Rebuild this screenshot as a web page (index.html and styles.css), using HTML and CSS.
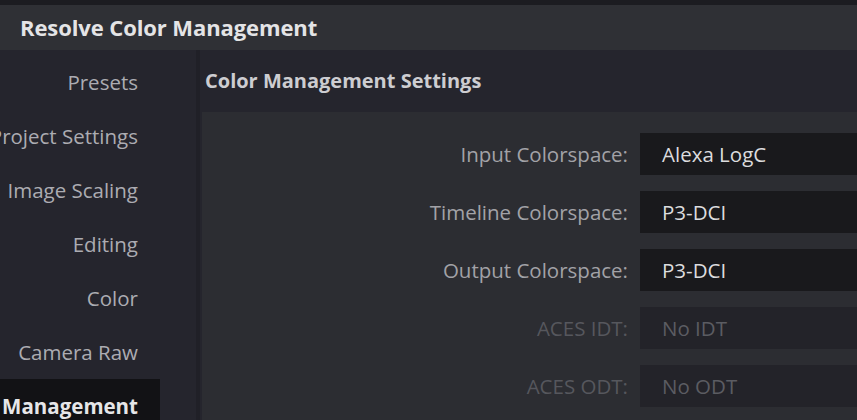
FILE: index.html
```html
<!DOCTYPE html>
<html>
<head>
<meta charset="utf-8">
<link rel="stylesheet" href="styles.css">
</head>
<body>
<div class="window">
  <header class="titlebar">Resolve Color Management</header>
  <div class="content">
    <nav class="sidebar">
      <div class="nav-item"><span>Presets</span></div>
      <div class="nav-item"><span>Project Settings</span></div>
      <div class="nav-item"><span>Image Scaling</span></div>
      <div class="nav-item"><span>Editing</span></div>
      <div class="nav-item"><span>Color</span></div>
      <div class="nav-item"><span>Camera Raw</span></div>
      <div class="nav-item selected"><span>Color Management</span></div>
    </nav>
    <main class="main">
      <h1 class="heading">Color Management Settings</h1>
      <section class="panel">
        <div class="row">
          <label class="label">Input Colorspace:</label>
          <div class="field">Alexa LogC</div>
        </div>
        <div class="row">
          <label class="label">Timeline Colorspace:</label>
          <div class="field">P3-DCI</div>
        </div>
        <div class="row">
          <label class="label">Output Colorspace:</label>
          <div class="field">P3-DCI</div>
        </div>
        <div class="row disabled">
          <label class="label">ACES IDT:</label>
          <div class="field">No IDT</div>
        </div>
        <div class="row disabled">
          <label class="label">ACES ODT:</label>
          <div class="field">No ODT</div>
        </div>
      </section>
    </main>
  </div>
</div>
</body>
</html>
```
FILE: styles.css
```css
html, body {
  margin: 0;
  padding: 0;
  background: #25252d;
  overflow: hidden;
}
.window {
  width: 857px;
  height: 420px;
  overflow: hidden;
  font-family: "Open Sans", "Noto Sans", sans-serif;
  display: flex;
  flex-direction: column;
}
.titlebar {
  height: 45px;
  border-top: 5px solid #1c1c21;
  background: #2f3035;
  color: #e4e4e6;
  font-size: 22px;
  font-weight: 700;
  line-height: 45px;
  padding-left: 20px;
  letter-spacing: -0.1px;
  flex: none;
}
.content {
  flex: 1;
  display: flex;
  min-height: 0;
}
.sidebar {
  flex: none;
  width: 200px;
  background: #25252d;
  border-right: 4px solid #202027;
  padding-top: 5px;
  box-sizing: border-box;
}
.nav-item {
  width: 160px;
  height: 54px;
  display: flex;
  justify-content: flex-end;
  align-items: center;
  padding-right: 22px;
  box-sizing: border-box;
  color: #acacb2;
  font-size: 20.5px;
  white-space: nowrap;
}
.nav-item.selected {
  background: #121215;
  color: #e6e6e8;
  font-weight: 700;
}
.main {
  flex: 1;
  display: flex;
  flex-direction: column;
  min-width: 0;
  background: #25252d;
  padding-left: 2px;
}
.heading {
  margin: 0;
  height: 62px;
  line-height: 62px;
  padding-left: 3px;
  font-size: 20px;
  font-weight: 700;
  color: #cdcdd1;
  flex: none;
}
.panel {
  flex: 1;
  background: #2c2d32;
  padding-top: 21px;
  display: flex;
  flex-direction: column;
  gap: 16px;
}
.row {
  display: grid;
  grid-template-columns: 426px 1fr;
  column-gap: 12px;
  align-items: center;
}
.label {
  text-align: right;
  color: #a2a2a7;
  font-size: 20.5px;
  white-space: nowrap;
}
.field {
  height: 42px;
  line-height: 42px;
  background: #19191c;
  color: #dcdcde;
  font-size: 20.5px;
  padding-left: 22px;
  white-space: nowrap;
}
.row.disabled .label {
  color: #56575d;
}
.row.disabled .field {
  background: #232329;
  color: #5b5c62;
}
```
